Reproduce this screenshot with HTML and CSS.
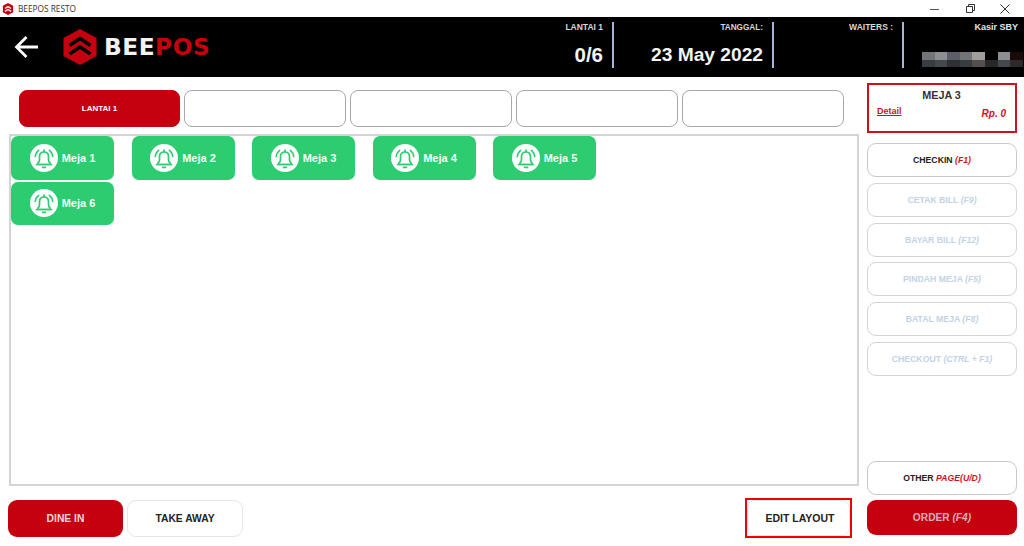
FILE: index.html
```html
<!DOCTYPE html>
<html lang="id">
<head>
<meta charset="utf-8">
<title>BEEPOS RESTO</title>
<link rel="stylesheet" href="styles.css">
</head>
<body>
<svg class="defs" width="0" height="0" aria-hidden="true">
  <symbol id="bell" viewBox="0 0 28 28">
    <circle cx="14" cy="14" r="14" fill="#fff"/>
    <g fill="none" stroke="#2ecc71" stroke-width="1.700" stroke-linecap="round" stroke-linejoin="round">
      <path d="M8 20.500v-1.500c1-.8 1.500-2 1.500-3.500v-3c0-2.600 2-4.700 4.500-4.700s4.500 2.100 4.500 4.700v3c0 1.500.5 2.700 1.500 3.500v1.500z"/>
      <path d="M6.500 20.500h15"/>
      <path d="M12.500 23.300h3"/>
      <path d="M14 7.500V6"/>
      <path d="M5.300 12.500c.2-2.500 1.300-4.600 3.200-6.200"/>
      <path d="M22.700 12.500c-.2-2.500-1.300-4.600-3.200-6.200"/>
    </g>
  </symbol>
</svg>

<div class="titlebar">
  <div class="title-left">
    <svg class="title-logo" viewBox="0 0 14 14"><path d="M7 0l6 3.300v7.400L7 14l-6-3.300V3.300z" fill="#c5000f"/><path d="M3.500 6.500L7 4.200l3.500 2.300M3.500 9.800L7 7.500l3.500 2.300" fill="none" stroke="#fff" stroke-width="1.500"/></svg>
    <span>BEEPOS RESTO</span>
  </div>
  <div class="win-controls">
    <svg viewBox="0 0 12 12"><path d="M1 6.500h9" stroke="#555" fill="none"/></svg>
    <svg viewBox="0 0 12 12"><path d="M2.500 3.500h6v6h-6zM4.500 3.500v-2h6v6h-2" stroke="#333" fill="none"/></svg>
    <svg viewBox="0 0 12 12"><path d="M1.500 1.500l9 9M10.500 1.500l-9 9" stroke="#333" fill="none"/></svg>
  </div>
</div>

<header class="header">
  <div class="brand">
    <svg class="back" viewBox="0 0 26 24"><path d="M24 12H3M12.500 2L2.500 12l10 10" fill="none" stroke="#fff" stroke-width="2.800"/></svg>
    <svg class="logo" viewBox="0 0 34 36"><path d="M17 0l16.500 9v18L17 36 .5 27V9z" fill="#c5000f"/><path d="M6.500 16.500L17 9.500l10.500 7M6.500 25L17 18l10.500 7" fill="none" stroke="#000" stroke-width="3.600"/></svg>
    <span class="wordmark">BEE<b>POS</b></span>
  </div>
  <div class="stats">
    <div class="stat stat-floor"><span class="stat-label">LANTAI 1</span><span class="stat-value value-big">0/6</span></div>
    <div class="stat stat-date"><span class="stat-label">TANGGAL:</span><span class="stat-value">23 May 2022</span></div>
    <div class="stat stat-waiter"><span class="stat-label">WAITERS :</span></div>
    <div class="stat stat-user">
      <span class="stat-label">Kasir SBY</span>
      <div class="redact" aria-hidden="true">
        <i class="p1"></i><i class="p2"></i><i class="p3"></i><i class="p1"></i><i class="p4"></i><i class="p5"></i><i class="p2"></i><i class="p6"></i>
      </div>
    </div>
  </div>
</header>

<main class="main">
  <section class="left">
    <nav class="tabs">
      <button class="tab tab-active">LANTAI 1</button>
      <button class="tab"></button>
      <button class="tab"></button>
      <button class="tab"></button>
      <button class="tab"></button>
    </nav>
    <div class="floor">
      <div class="table"><svg class="bell"><use href="#bell"/></svg>Meja 1</div>
      <div class="table"><svg class="bell"><use href="#bell"/></svg>Meja 2</div>
      <div class="table"><svg class="bell"><use href="#bell"/></svg>Meja 3</div>
      <div class="table"><svg class="bell"><use href="#bell"/></svg>Meja 4</div>
      <div class="table"><svg class="bell"><use href="#bell"/></svg>Meja 5</div>
      <div class="table"><svg class="bell"><use href="#bell"/></svg>Meja 6</div>
    </div>
    <div class="bottom">
      <button class="btn-mode btn-red">DINE IN</button>
      <button class="btn-mode btn-white">TAKE AWAY</button>
      <button class="btn-edit"><span class="edit-inner">EDIT LAYOUT</span></button>
    </div>
  </section>

  <aside class="side">
    <div class="selected">
      <div class="selected-name">MEJA 3</div>
      <div class="selected-row"><a class="detail">Detail</a><em class="price">Rp. 0</em></div>
    </div>
    <div class="actions">
      <button class="action">CHECKIN <em class="key">(F1)</em></button>
      <button class="action off">CETAK BILL <em>(F9)</em></button>
      <button class="action off">BAYAR BILL <em>(F12)</em></button>
      <button class="action off">PINDAH MEJA <em>(F5)</em></button>
      <button class="action off">BATAL MEJA <em>(F8)</em></button>
      <button class="action off">CHECKOUT <em>(CTRL + F1)</em></button>
    </div>
    <div class="side-bottom">
      <button class="action">OTHER <em class="key">PAGE(U/D)</em></button>
      <button class="order">ORDER <em>(F4)</em></button>
    </div>
  </aside>
</main>
</body>
</html>
```
FILE: styles.css
```css
* { box-sizing: border-box; }
html, body { margin: 0; height: 546px; overflow: hidden; background: #fff; }
body { font-family: "Liberation Sans", Arial, sans-serif; color: #222; }
button { font-family: inherit; padding: 0; cursor: pointer; }
.defs { display: block; height: 0; }

.titlebar { height: 17px; display: flex; justify-content: space-between; align-items: center; background: #fff; }
.title-left { display: flex; align-items: center; gap: 4px; padding-left: 2px; font-family: "Open Sans", sans-serif; font-size: 8.300px; color: #333; }
.title-logo { width: 12px; height: 12px; }
.win-controls { display: flex; gap: 23px; padding-right: 13px; }
.win-controls svg { width: 12px; height: 12px; display: block; }

.header { height: 60px; background: #000; display: flex; justify-content: space-between; color: #fff; }
.brand { display: flex; align-items: center; padding-left: 14px; }
.back { width: 26px; height: 24px; margin-right: 23px; margin-top: -1px; }
.logo { width: 34px; height: 36px; margin-right: 7px; }
.wordmark { font-family: "DejaVu Sans", sans-serif; font-weight: 700; font-size: 23.300px; letter-spacing: .5px; color: #f2f2f2; line-height: 1; }
.wordmark b { color: #c5000f; }

.stats { display: flex; padding-top: 5px; height: 55px; }
.stat { display: flex; flex-direction: column; align-items: flex-end; border-right: 2px solid #a9b4d6; height: 46px; padding-right: 9px; }
.stat-label { font-size: 8.500px; font-weight: 700; color: #d6d6d6; line-height: 11px; margin-top: 0; }
.stat-value { font-size: 19.200px; font-weight: 700; color: #f4f4f4; line-height: 23px; margin-top: 10px; }
.value-big { font-size: 20.500px; }
.stat-floor { width: 64px; }
.stat-date { width: 160px; }
.stat-date .stat-label { font-size: 8.200px; }
.stat-waiter { width: 130px; padding-right: 9px; }
.stat-user { width: 120px; border-right: 0; padding-right: 6px; }
.stat-user .stat-label { color: #e4e4e4; font-size: 9px; }

.redact { display: flex; align-items: flex-end; margin-top: 12px; margin-right: -5px; height: 22px; width: 101px; }
.redact i { display: block; width: 12.600px; height: 15px; }
.p1 { background: linear-gradient(#71757a 50%, #3a3d40 50%); }
.p2 { background: linear-gradient(#8b8f94 50%, #45484b 50%); }
.p3 { background: linear-gradient(#5c6066 50%, #2e3033 50%); }
.p4 { background: linear-gradient(#a39d9b 50%, #54504f 50%); }
.p5 { background: linear-gradient(#000 50%, #26282a 50%); }
.p6 { background: linear-gradient(#1a0a0a 50%, #2c2a2a 50%); }

.main { display: flex; height: 469px; }
.left { width: 867px; display: flex; flex-direction: column; }

.tabs { display: flex; gap: 4px; padding: 13px 0 0 19px; height: 57px; }
.tab { width: 162px; height: 37px; border: 1px solid #a8a8a8; border-radius: 8px; background: #fff; font-size: 8px; font-weight: 700; color: #fff; }
.tab-active { width: 161px; background: #c5000f; border-color: #c5000f; }

.floor { margin-left: 9px; width: 850px; height: 352px; border: 2px solid #d4d4d4; padding: 0; display: grid; grid-template-columns: repeat(5, 103px); column-gap: 17.500px; row-gap: 2px; align-content: start; }
.table { height: 43.500px; background: #2ecc71; border-radius: 7px; display: flex; align-items: center; justify-content: center; gap: 4px; color: #f2fff7; font-size: 11px; font-weight: 700; }
.bell { width: 28px; height: 28px; }

.bottom { display: flex; align-items: center; padding: 12px 15px 0 8px; }
.btn-mode { width: 116px; height: 37px; border-radius: 9px; font-size: 10.300px; font-weight: 700; margin-right: 4px; }
.btn-red { width: 115px; background: #c5000f; border: 0; color: #f3d9dc; }
.btn-white { background: #fff; border: 1px solid #e6e6e6; color: #222; }
.btn-edit { margin-left: auto; width: 107px; height: 40px; background: #fff; border: 2px solid #f00000; color: #222; font-size: 10.500px; font-weight: 700; border-radius: 0; }
.edit-inner { display: flex; align-items: center; justify-content: center; height: 100%; padding-left: 3px; border: 1px solid #e6e6e6; border-radius: 8px; }

.side { width: 150px; display: flex; flex-direction: column; padding-top: 6px; height: 469px; }
.selected { height: 50px; border: 2px solid #d0101e; padding: 4px 9px 0 8px; }
.selected-name { text-align: center; font-size: 10.800px; font-weight: 700; color: #333; line-height: 12px; }
.selected-row { display: flex; justify-content: space-between; margin-top: 4px; }
.detail { font-size: 9px; font-weight: 700; color: #c8142a; text-decoration: underline; line-height: 12px; }
.price { font-size: 10px; font-weight: 700; color: #d0101e; line-height: 12px; margin-top: 3px; }

.actions { display: flex; flex-direction: column; gap: 5.800px; margin-top: 10px; }
.action { width: 150px; height: 34px; border: 1px solid #c8c8c8; border-radius: 9px; background: #fff; font-size: 8.700px; font-weight: 700; color: #222; }
.action em { font-style: italic; }
.key { color: #d0101e; }
.off { border-color: #d4d4d4; color: #c2d3e6; }

.side-bottom { margin-top: auto; display: flex; flex-direction: column; gap: 5px; padding-bottom: 11px; }
.order { width: 150px; height: 35px; border: 0; border-radius: 9px; background: #c5000f; color: #d9aebc; font-size: 10.200px; font-weight: 700; }
```
